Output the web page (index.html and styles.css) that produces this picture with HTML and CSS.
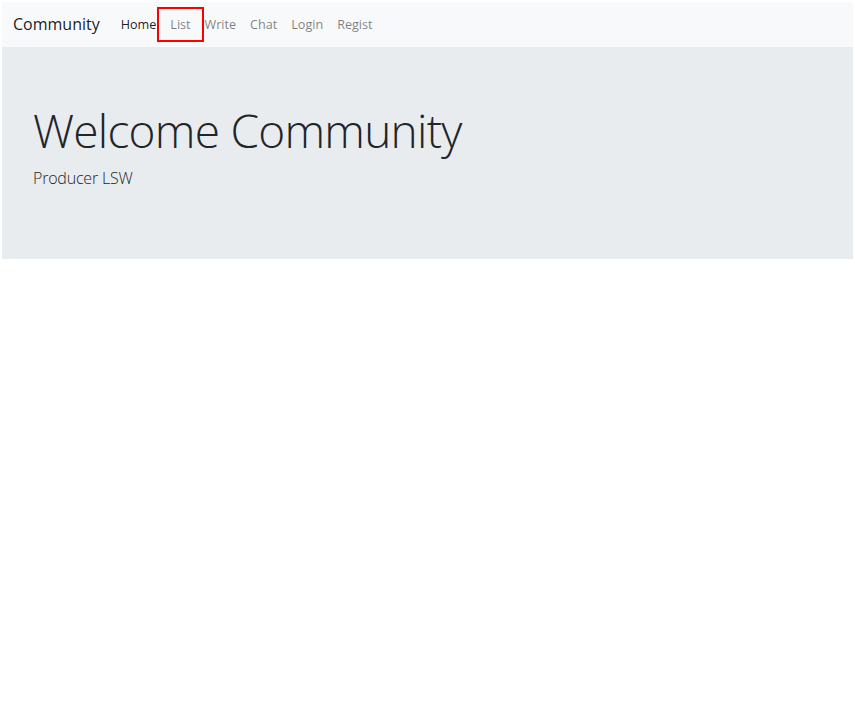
FILE: index.html
```html
<!DOCTYPE html>
<html lang="en">
<head>
<meta charset="utf-8">
<title>Community</title>
<link rel="stylesheet" href="styles.css">
</head>
<body>
<div class="page">
  <nav class="navbar">
    <a class="brand" href="#">Community</a>
    <ul class="nav">
      <li><a class="nav-link active" href="#">Home</a></li>
      <li><a class="nav-link focused" href="#">List</a></li>
      <li><a class="nav-link" href="#">Write</a></li>
      <li><a class="nav-link" href="#">Chat</a></li>
      <li><a class="nav-link" href="#">Login</a></li>
      <li><a class="nav-link" href="#">Regist</a></li>
    </ul>
  </nav>
  <header class="jumbotron">
    <h1 class="display">Welcome Community</h1>
    <p class="lead">Producer LSW</p>
  </header>
</div>
</body>
</html>
```

FILE: styles.css
```css
* { box-sizing: border-box; }
html, body { margin: 0; padding: 0; background: #fff; }
body {
  font-family: "Open Sans", "Noto Sans", sans-serif;
  color: #212529;
}
.page { padding: 2px 2px 0 2px; }
.navbar {
  background: #f8f9fa;
  height: 45px;
  display: flex;
  align-items: center;
  padding: 0 11px;
}
.brand {
  font-size: 16px;
  color: rgba(0,0,0,.9);
  text-decoration: none;
  margin-right: 14px;
  line-height: 24px;
  margin-top: -2px;
}
.nav {
  list-style: none;
  margin: 0;
  padding: 0;
  display: flex;
}
.nav-link {
  display: block;
  font-size: 12.6px;
  line-height: 20px;
  padding: 7px 7px;
  margin-top: 1px;
  color: rgba(0,0,0,.5);
  text-decoration: none;
}
.nav-link.active { color: rgba(0,0,0,.9); }
.nav-link.focused { position: relative; }
.nav-link.focused::after {
  content: "";
  position: absolute;
  left: -6px;
  right: -6px;
  top: -1px;
  bottom: 0;
  border: 2px solid #ff0000;
}
.jumbotron {
  background: #e9ecef;
  height: 212px;
  padding: 55px 31px 0 31px;
}
.display {
  margin: 0;
  font-size: 46px;
  font-weight: 300;
  line-height: 57px;
  letter-spacing: -0.75px;
}
.lead {
  margin: 6px 0 0 0;
  font-size: 16px;
  font-weight: 300;
  line-height: 26px;
  letter-spacing: -0.2px;
}
```
